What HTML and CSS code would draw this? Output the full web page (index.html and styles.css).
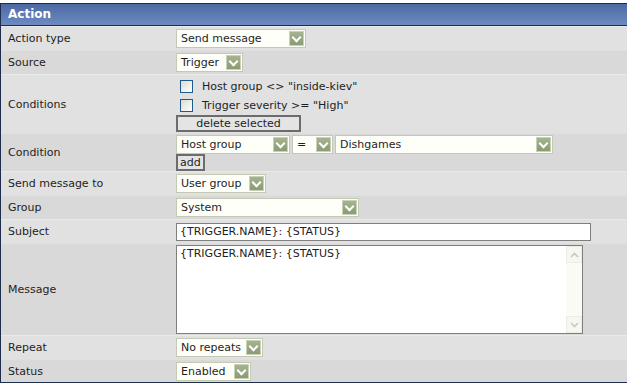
FILE: index.html
```html
<!DOCTYPE html>
<html lang="en">
<head>
  <meta charset="UTF-8">
  <title>Action</title>
  <link rel="stylesheet" href="styles.css">
</head>
<body>
  <div class="frame">
    <div class="header">Action</div>

    <div class="row r24">
      <div class="label">Action type</div>
      <div class="field"><span class="select w130">Send message<i class="arr"></i></span></div>
    </div>
    <div class="row r24 alt">
      <div class="label">Source</div>
      <div class="field"><span class="select w67">Trigger<i class="arr"></i></span></div>
    </div>
    <div class="row conds">
      <div class="label">Conditions</div>
      <div class="field stack">
        <div class="check"><span class="box"></span>Host group &lt;&gt; "inside-kiev"</div>
        <div class="check"><span class="box"></span>Trigger severity &gt;= "High"</div>
        <span class="btn wide">delete selected</span>
      </div>
    </div>
    <div class="row cond alt">
      <div class="label">Condition</div>
      <div class="field stack">
        <div class="line">
          <span class="select w114">Host group<i class="arr"></i></span>
          <span class="select w41">=<i class="arr"></i></span>
          <span class="select w218">Dishgames<i class="arr"></i></span>
        </div>
        <span class="btn">add</span>
      </div>
    </div>
    <div class="row r24">
      <div class="label">Send message to</div>
      <div class="field"><span class="select w90">User group<i class="arr"></i></span></div>
    </div>
    <div class="row r24 alt">
      <div class="label">Group</div>
      <div class="field"><span class="select w183">System<i class="arr"></i></span></div>
    </div>
    <div class="row r24">
      <div class="label">Subject</div>
      <div class="field"><span class="input">{TRIGGER.NAME}: {STATUS}</span></div>
    </div>
    <div class="row msg alt">
      <div class="label">Message</div>
      <div class="field">
        <div class="textarea">
          <div class="text">{TRIGGER.NAME}: {STATUS}</div>
          <div class="scroll">
            <span class="sbtn"><svg width="9" height="6" viewBox="0 0 9 6"><path d="M1 5 L4.5 1.5 L8 5" fill="none" stroke="#c8c8c0" stroke-width="1.6"/></svg></span>
            <span class="sbtn"><svg width="9" height="6" viewBox="0 0 9 6"><path d="M1 1 L4.5 4.5 L8 1" fill="none" stroke="#c8c8c0" stroke-width="1.6"/></svg></span>
          </div>
        </div>
      </div>
    </div>
    <div class="row r24">
      <div class="label">Repeat</div>
      <div class="field"><span class="select w87">No repeats<i class="arr"></i></span></div>
    </div>
    <div class="row r23 alt">
      <div class="label">Status</div>
      <div class="field"><span class="select w75">Enabled<i class="arr"></i></span></div>
    </div>
  </div>
</body>
</html>
```

FILE: styles.css
```css
body {
  margin: 0;
  padding-top: 3px;
  background: #fff;
  font-family: "DejaVu Sans", Verdana, sans-serif;
  font-size: 11px;
  color: #1e1e1e;
}
.frame {
  width: 627px;
  box-sizing: border-box;
  border: 1px solid #1f2d4d;
  border-right: none;
  background: #e0e0e0;
}
.header {
  height: 21px;
  line-height: 21px;
  padding-left: 7px;
  color: #fff;
  font-weight: bold;
  font-size: 12px;
  background: linear-gradient(#4c69a3, #6d8bc1);
  border-bottom: 1px solid #1f2d4d;
}
.row {
  display: flex;
  align-items: center;
  background: #e1e1e1;
  border-top: 1px solid #e9e9e9;
  box-sizing: border-box;
}
.row.alt {
  background: #d9d9d9;
  border-top-color: #dfdfdf;
}
.r24 { height: 24px; }
.r23 { height: 23px; }
.conds { height: 59px; }
.cond { height: 38px; }
.msg { height: 92px; }
.label {
  width: 175px;
  padding-left: 7px;
  box-sizing: border-box;
  flex: none;
}
.field {
  flex: 1;
  display: flex;
  align-items: center;
}
.stack {
  flex-direction: column;
  align-items: flex-start;
}
.line {
  display: flex;
  gap: 2px;
}
.select {
  display: inline-flex;
  align-items: center;
  justify-content: space-between;
  height: 19px;
  box-sizing: border-box;
  padding-left: 4px;
  padding-right: 1px;
  background: #fffffa;
  border: 1px solid #c3c9b3;
}
.arr {
  width: 15px;
  height: 15px;
  box-sizing: border-box;
  border: 1px solid #c9d1bd;
  background: linear-gradient(#a5b48f, #8a9c73);
  position: relative;
}
.arr::after {
  content: "";
  position: absolute;
  left: 3px;
  top: 2px;
  width: 5px;
  height: 5px;
  border-right: 2px solid #fff;
  border-bottom: 2px solid #fff;
  transform: rotate(45deg);
}
.w130 { width: 130px; }
.w67 { width: 67px; }
.w114 { width: 114px; }
.w41 { width: 41px; }
.w218 { width: 218px; }
.w90 { width: 90px; }
.w183 { width: 183px; }
.w87 { width: 87px; }
.w75 { width: 75px; }
.check {
  display: flex;
  align-items: center;
  height: 19px;
  padding-left: 4px;
}
.box {
  width: 11px;
  height: 11px;
  border: 1px solid #1e5a8c;
  background: linear-gradient(135deg, #dcdcd4, #fff);
  margin-right: 9px;
}
.btn {
  display: inline-block;
  height: 17px;
  line-height: 13px;
  box-sizing: border-box;
  padding: 0 2px;
  border: 2px solid #6c6c6c;
  background: #e4e4e4;
}
.btn.wide {
  width: 125px;
  text-align: center;
}
.input {
  display: block;
  width: 415px;
  height: 18px;
  line-height: 16px;
  box-sizing: border-box;
  padding-left: 3px;
  background: #fff;
  border: 1px solid #7f7f7f;
}
.textarea {
  display: flex;
  width: 407px;
  height: 89px;
  box-sizing: border-box;
  background: #fff;
  border: 1px solid #7f7f7f;
}
.text {
  flex: 1;
  padding: 1px 3px;
}
.scroll {
  width: 16px;
  background: #fbfbf6;
  display: flex;
  flex-direction: column;
  justify-content: space-between;
}
.sbtn {
  height: 15px;
  display: flex;
  align-items: center;
  justify-content: center;
  border: 1px solid #ecece4;
  background: #f7f7f1;
}
```
